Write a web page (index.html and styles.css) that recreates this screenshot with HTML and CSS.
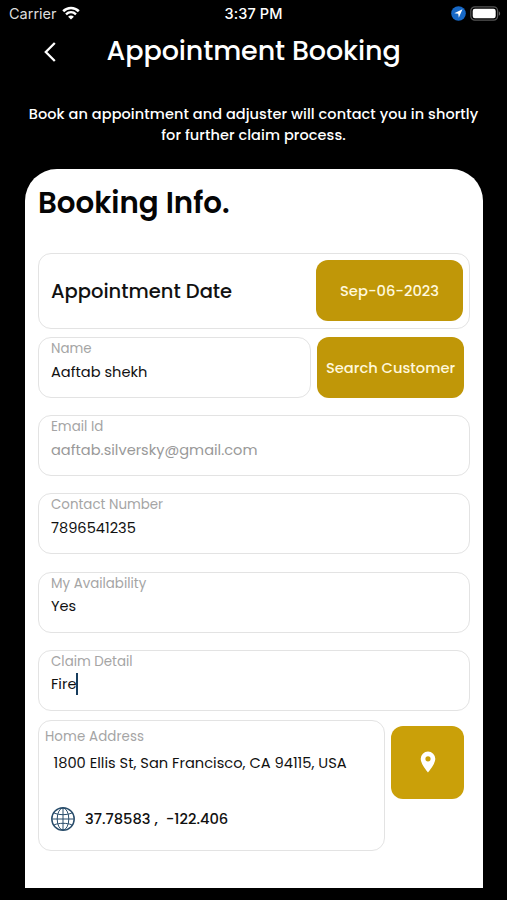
FILE: index.html
```html
<!DOCTYPE html>
<html lang="en">
<head>
<meta charset="utf-8">
<title>Appointment Booking</title>
<link rel="stylesheet" href="styles.css">
</head>
<body>
<div class="status">
  <div class="status-left"><span class="carrier">Carrier</span>
    <svg class="wifi" viewBox="0 0 18 14" width="18" height="14"><path d="M1.2 5.2C5.6.9 12.4.9 16.8 5.2" fill="none" stroke="#fff" stroke-width="2.6"/><path d="M4 8.3c2.9-2.7 7.1-2.7 10 0" fill="none" stroke="#fff" stroke-width="2.4"/><path d="M9 13.5 6.1 10.7c1.7-1.5 4.1-1.5 5.8 0z" fill="#fff"/></svg>
  </div>
  <span class="time">3:37 PM</span>
  <div class="status-right">
    <svg viewBox="0 0 15 15" width="15" height="15"><circle cx="7.5" cy="7.5" r="7.3" fill="#1768c6"/><path d="M11.5 3.3 3.3 7.2l3.9.5.6 4z" fill="#fff"/></svg>
    <svg viewBox="0 0 31 15" width="31" height="15"><rect x=".8" y=".8" width="26.8" height="13.4" rx="4" fill="none" stroke="#555" stroke-width="1.2"/><rect x="2.7" y="2.7" width="23" height="9.6" rx="2.2" fill="#fff"/><path d="M28.8 5.2v4.6c1.8-.8 1.8-3.8 0-4.6z" fill="#666"/></svg>
  </div>
</div>
<header class="header">
  <svg class="back" viewBox="0 0 12 20" width="12" height="20"><path d="M10.8 1 1.8 10l9 9" fill="none" stroke="#fff" stroke-width="2.3"/></svg>
  <h1 class="title">Appointment Booking</h1>
</header>
<p class="intro">Book an appointment and adjuster will contact you in shortly<br>for further claim process.</p>
<main class="card">
  <h2 class="heading">Booking Info.</h2>
  <section class="box date-row">
    <span class="date-label">Appointment Date</span>
    <button class="btn date-btn">Sep-06-2023</button>
  </section>
  <div class="name-row">
    <div class="box field name-field"><span class="label">Name</span><span class="value">Aaftab shekh</span></div>
    <button class="btn search-btn">Search Customer</button>
  </div>
  <div class="fields">
    <div class="box field"><span class="label">Email Id</span><span class="value muted">aaftab.silversky@gmail.com</span></div>
    <div class="box field"><span class="label">Contact Number</span><span class="value">7896541235</span></div>
    <div class="box field"><span class="label">My Availability</span><span class="value">Yes</span></div>
    <div class="box field"><span class="label">Claim Detail</span><span class="value">Fire<i class="caret"></i></span></div>
  </div>
  <div class="address-row">
    <div class="box address">
      <span class="label">Home Address</span>
      <span class="street">1800 Ellis St, San Francisco, CA 94115, USA</span>
      <div class="coords">
        <svg viewBox="0 0 24 24" width="24" height="24" fill="none" stroke="#294d6b"><circle cx="12" cy="12" r="11.2" stroke-width="1.5"/><path d="M12 1v22M1 12h22M3.2 6.2c5 2 12.6 2 17.6 0M3.2 17.8c5-2 12.6-2 17.6 0" stroke-width="1"/><ellipse cx="12" cy="12" rx="5.8" ry="11" stroke-width="1"/></svg>
        <span class="lat">37.78583 ,</span><span class="lng">-122.406</span>
      </div>
    </div>
    <button class="btn pin-btn" aria-label="Pick location"><svg viewBox="0 0 16 22" width="16" height="22"><path fill="#fff" fill-rule="evenodd" d="M8 .5A7.3 7.3 0 0 0 .7 7.8C.7 13.2 8 21.5 8 21.5s7.3-8.3 7.3-13.7A7.3 7.3 0 0 0 8 .5zm0 4.7a2.6 2.6 0 1 1 0 5.2 2.6 2.6 0 0 1 0-5.2z"/></svg></button>
  </div>
</main>
</body>
</html>
```

FILE: styles.css
```css
* { box-sizing: border-box; }
body { margin: 0; height: 900px; background: #000; color: #fff; font-family: Poppins, Inter, sans-serif; font-size: 15px; overflow: hidden; display: flow-root; }
h1, h2, p { margin: 0; }
svg { display: block; flex: none; }
span { white-space: nowrap; }

.status { height: 28px; display: grid; grid-template-columns: 1fr auto 1fr; align-items: center; padding: 0 6px 0 9px; font: 14.5px/20px Inter, sans-serif; }
.status-left, .status-right { display: flex; align-items: center; }
.status-left { gap: 6px; color: #ddd; }
.status-right { justify-content: flex-end; gap: 4px; }
.status-left svg { margin: -2px 0 0 -1px; }
.status-right svg { margin-top: -1px; }
.time { font-weight: 500; margin-left: -3px; letter-spacing: .1px; }

.header { height: 48px; display: flex; align-items: center; padding: 0 0 3px 43.5px; }
.back { margin-top: 3px; }
.title { margin-left: 51px; font-size: 27px; line-height: 40px; font-weight: 500; letter-spacing: -.1px; white-space: nowrap; }
.intro { margin-top: 28px; font-size: 14.5px; line-height: 20.5px; font-weight: 500; letter-spacing: .08px; text-align: center; white-space: nowrap; }

.card { margin: 24px 24.5px 0 25px; height: 719px; background: #fff; color: #111; border-radius: 32px 32px 0 0; padding: 14px 12.5px 0 13px; }
.heading { font-size: 29.3px; line-height: 39px; font-weight: 600; height: 70px; color: #050505; white-space: nowrap; }
.box { border: 1.5px solid #e3e3e3; border-radius: 13px; background: #fff; }
.btn { border: 0; padding: 0; border-radius: 12px; background: #c09708; color: #fff8dc; font: 500 14.7px/20px Poppins, Inter, sans-serif; white-space: nowrap; flex: none; }

.date-row { height: 76px; display: flex; align-items: center; justify-content: space-between; padding: 0 6px 1px 12px; }
.date-label { font-size: 19.5px; font-weight: 500; padding-top: 2px; }
.date-btn { width: 147px; height: 61px; }
.name-row { margin-top: 8px; display: flex; gap: 6px; }
.name-field { width: 273px; }
.search-btn { width: 147px; height: 61px; }

.field { height: 61px; padding: 2px 12px 0; display: flex; flex-direction: column; align-items: flex-start; }
.label { font-size: 13.4px; line-height: 18px; color: #a5a5a5; }
.value { margin-top: 2.5px; font-size: 14.6px; line-height: 22px; }
.muted { color: #999; }
.fields { margin-top: 17px; display: grid; gap: 17.3px; }
.caret { display: inline-block; width: 2px; height: 22px; background: #173d5d; vertical-align: top; }

.address-row { margin-top: 9px; display: flex; gap: 6px; }
.address { width: 347px; height: 131px; padding: 7px 6px; display: flex; flex-direction: column; align-items: flex-start; }
.address .label { letter-spacing: .1px; }
.street { margin: 6px 0 0 8.5px; font-size: 14.65px; line-height: 22px; }
.coords { margin: 33px 0 0 6px; display: flex; align-items: center; font-size: 14.7px; line-height: 24px; font-weight: 500; }
.lat { margin-left: 10px; }
.lng { margin-left: 8px; }
.pin-btn { width: 73px; height: 73px; margin-top: 6px; background: #caa009; display: grid; place-items: center; }
```
